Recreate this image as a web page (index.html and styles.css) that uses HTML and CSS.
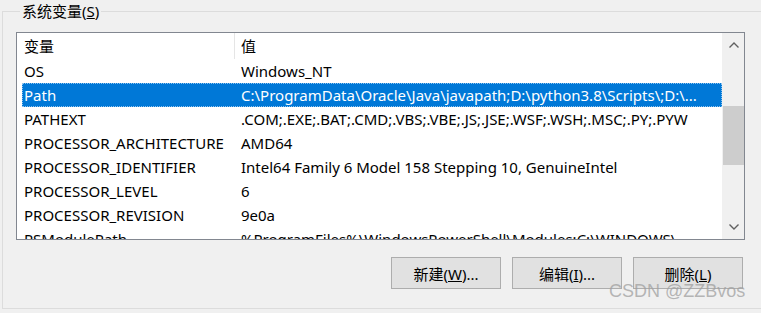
FILE: index.html
```html
<!DOCTYPE html>
<html lang="zh-CN">
<head>
    <meta charset="UTF-8">
    <title>系统变量</title>
    <link rel="stylesheet" href="styles.css">
</head>
<body>
    <fieldset class="group">
        <legend>系统变量(<u>S</u>)</legend>
        <div class="listbox">
            <div class="list">
                <div class="header">
                    <div class="col name">变量</div>
                    <div class="col value">值</div>
                </div>
                <div class="rows">
                    <div class="row"><div class="col name">OS</div><div class="col value">Windows_NT</div></div>
                    <div class="row selected"><div class="col name">Path</div><div class="col value">C:\ProgramData\Oracle\Java\javapath;D:\python3.8\Scripts\;D:\...</div></div>
                    <div class="row"><div class="col name">PATHEXT</div><div class="col value">.COM;.EXE;.BAT;.CMD;.VBS;.VBE;.JS;.JSE;.WSF;.WSH;.MSC;.PY;.PYW</div></div>
                    <div class="row"><div class="col name">PROCESSOR_ARCHITECTURE</div><div class="col value">AMD64</div></div>
                    <div class="row"><div class="col name">PROCESSOR_IDENTIFIER</div><div class="col value">Intel64 Family 6 Model 158 Stepping 10, GenuineIntel</div></div>
                    <div class="row"><div class="col name">PROCESSOR_LEVEL</div><div class="col value">6</div></div>
                    <div class="row"><div class="col name">PROCESSOR_REVISION</div><div class="col value">9e0a</div></div>
                    <div class="row"><div class="col name">PSModulePath</div><div class="col value">%ProgramFiles%\WindowsPowerShell\Modules;C:\WINDOWS\...</div></div>
                </div>
            </div>
            <div class="scrollbar">
                <div class="arrow">
                    <svg width="10" height="6" viewBox="0 0 10 6"><path d="M0.5 5.5 L5 1 L9.5 5.5" fill="none" stroke="#606060" stroke-width="1.4"/></svg>
                </div>
                <div class="track">
                    <div class="thumb"></div>
                </div>
                <div class="arrow">
                    <svg width="10" height="6" viewBox="0 0 10 6"><path d="M0.5 0.5 L5 5 L9.5 0.5" fill="none" stroke="#606060" stroke-width="1.4"/></svg>
                </div>
            </div>
        </div>
        <div class="buttons">
            <button>新建(<u>W</u>)...</button>
            <button>编辑(<u>I</u>)...</button>
            <button>删除(<u>L</u>)</button>
        </div>
    </fieldset>
    <div class="watermark">CSDN @ZZBvos</div>
</body>
</html>
```

FILE: styles.css
```css
body {
    margin: 0;
    background: #f0f0f0;
    font-family: "Noto Sans", "Noto Sans CJK SC", sans-serif;
    font-size: 15px;
    color: #000;
    overflow: hidden;
    width: 761px;
    height: 313px;
    position: relative;
}
.group {
    margin: 0 0 0 2px;
    padding: 0 0 0 13px;
    width: 800px;
    height: 307px;
    border: 1px solid #dcdcdc;
}
.group legend {
    padding: 0 2px;
    margin-left: 4px;
    height: 22px;
    line-height: 22px;
}
.listbox {
    margin-top: 10px;
    width: 727px;
    height: 206px;
    border: 1px solid #828790;
    background: #fff;
    display: flex;
}
.list {
    flex: 1;
    overflow: hidden;
}
.header {
    display: flex;
    height: 26px;
    line-height: 26px;
}
.header .name {
    width: 210px;
    padding-left: 7px;
    border-right: 1px solid #e5e5e5;
}
.header .value {
    padding-left: 6px;
}
.rows {
    padding-left: 5px;
}
.row {
    display: flex;
    height: 24px;
    line-height: 24px;
    white-space: nowrap;
}
.row .name {
    width: 215px;
    padding-left: 2px;
    flex-shrink: 0;
}
.row .value {
    flex: 1;
    padding-left: 2px;
    padding-right: 4px;
    overflow: hidden;
}
.row.selected {
    background: #0078d7;
    color: #fff;
    outline: 1px dotted #8fc3ee;
    outline-offset: -1px;
}
.scrollbar {
    width: 21px;
    background: #f0f0f0;
    border-left: 1px solid #f0f0f0;
    display: flex;
    flex-direction: column;
}
.arrow {
    height: 24px;
    display: flex;
    align-items: center;
    justify-content: center;
}
.track {
    flex: 1;
    padding-top: 49px;
}
.thumb {
    height: 59px;
    background: #cdcdcd;
}
.buttons {
    display: flex;
    justify-content: flex-end;
    gap: 11px;
    width: 727px;
    margin-top: 17px;
}
.buttons button {
    width: 110px;
    height: 32px;
    background: #e1e1e1;
    border: 1px solid #adadad;
    font-family: "Noto Sans", "Noto Sans CJK SC", sans-serif;
    font-size: 15px;
    color: #000;
    padding: 0;
}
.watermark {
    position: absolute;
    left: 609px;
    top: 281px;
    font-family: "Liberation Sans", sans-serif;
    font-size: 18px;
    color: rgba(160, 160, 160, 0.75);
}
```
